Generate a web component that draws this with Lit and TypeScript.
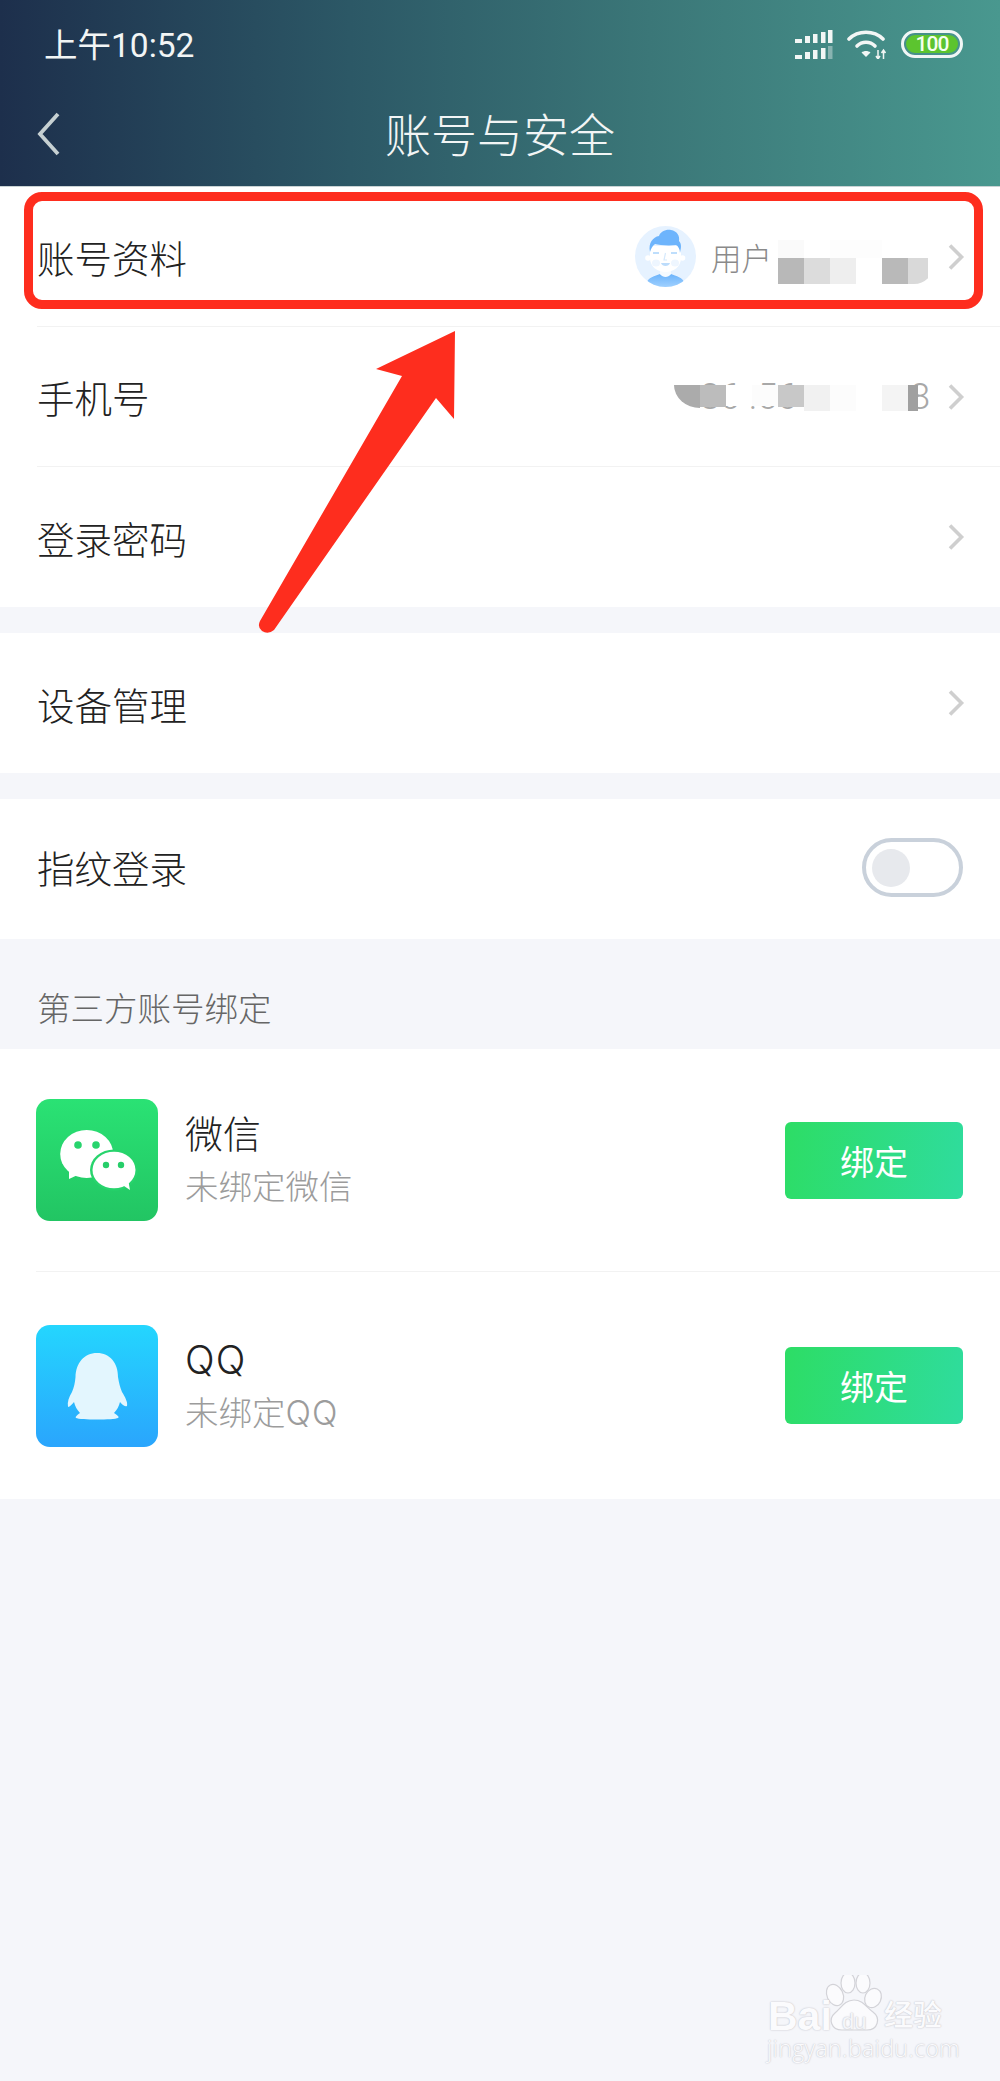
import { LitElement, html, css, svg } from "lit";
import { customElement } from "lit/decorators.js";

const chevron = html`<svg class="chev" width="18" height="28" viewBox="0 0 18 28"><path d="M3 2.5 L14.5 14 L3 25.5" fill="none" stroke="#cfcfcf" stroke-width="3.6"/></svg>`;

type Cell = [string, string?, number?];
const userCells: Cell[] = [
  ["#fafafa"], ["#fff"], ["#fdfdfd"], ["#fdfdfd"], ["#fff"], ["#fff"],
  ["#b8b8b8"], ["#dcdcdc"], ["#eeeeee"], ["#fff"], ["#b9b9b9"], ["#d9d9d9", "rr"],
];
const phoneCells: Cell[] = [
  ["#ababab", "rl", 23], ["#bcbcbc", "", 22], ["#fff", "", 21], ["#fcfcfc", "", 21], ["#c8c8c8", "", 22],
  ["#f1f1f1", "", 26], ["#fcfcfc", "", 26], ["#fff", "", 26], ["#f4f4f4", "", 26], ["#a0a0a0", "", 26],
];

@customElement("app-root")
export class AppRoot extends LitElement {
  static styles = css`
    :host { display: block; position: relative; height: 2081px; overflow: hidden; background: #f5f6fa;
      font-family: Roboto, "Noto Sans CJK SC", sans-serif; color: #333; }
    * { box-sizing: border-box; }
    .head { height: 187px; background: linear-gradient(90deg, #1d2f4c 0%, #2c5866 35%, #3b7778 65%, #49988f 100%); color: #f2f5f5; border-bottom: 1px solid #c9d3d4; }
    .status { height: 92px; display: flex; align-items: center; justify-content: space-between; padding: 0 37px 0 44px; }
    .time { font-size: 33.5px; line-height: 1; }
    .icons { display: flex; align-items: center; gap: 14px; margin-top: -4px; }
    .battery { width: 62px; height: 28px; border: 3px solid #f1f6f5; border-radius: 14px; padding: 2px; }
    .battery span { display: flex; height: 100%; border-radius: 9px; background: #5cc42f; color: #f4fff0; font-size: 21px; letter-spacing: -1px; font-weight: 500; line-height: 1; align-items: center; justify-content: center; }
    .nav { height: 94px; position: relative; display: flex; align-items: center; justify-content: center; padding-bottom: 6px; }
    .title { font-size: 46px; font-weight: 300; line-height: 1; }
    .back { position: absolute; left: 36px; top: 20px; }
    .group { background: #fff; margin-bottom: 26px; }
    .row { height: 140px; display: flex; align-items: center; justify-content: space-between; padding-right: 35px; margin-left: 37px; font-size: 37.5px; font-weight: 300; color: #222; border-bottom: 1px solid #f2f2f2; }
    .row.last { border-bottom: none; }
    .row.fp { padding-bottom: 6px; padding-right: 37px; }
    .value { display: flex; align-items: center; color: #8a8a8a; font-size: 30.5px; }
    .avatar { margin-right: 15px; }
    .mosaic { display: grid; grid-template-columns: repeat(6, 26px); grid-template-rows: 18px 26px; width: 150px; height: 44px; margin: 0 19px 0 6px; overflow: hidden; transform: translateY(5px); }
    .cell.rl { border-bottom-left-radius: 26px 23px; }
    .cell.rr { border-top-right-radius: 6px; border-bottom-right-radius: 20px; }
    .phone { position: relative; margin-right: 17px; width: 256px; height: 42px; line-height: 42px; white-space: nowrap; color: #a8a8a8; font-size: 36px; display: flex; justify-content: space-between; padding-left: 26px; }
    .veil { position: absolute; left: 0; top: 0; padding-top: 9px; display: grid; grid-template-columns: repeat(9, 26px) 10px; align-items: start; width: 244px; height: 42px; }
    .toggle { width: 101px; height: 59px; border: 4px solid #c9d1db; border-radius: 30px; background: #fff; padding: 7px 6px; transform: translateY(1px); }
    .toggle i { display: block; width: 38px; height: 38px; border-radius: 50%; background: #e7e9ed; }
    .label { height: 110px; padding: 52px 0 0 37px; font-size: 33.5px; line-height: 38px; font-weight: 300; color: #666; }
    .third { background: #fff; }
    .acct { display: flex; align-items: center; margin-left: 36px; padding-right: 37px; font-weight: 300; }
    .acct.a { height: 223px; border-bottom: 1px solid #f2f2f2; }
    .acct.b { height: 227px; }
    .icon { width: 122px; height: 122px; border-radius: 14px; flex: none; display: block; }
    .wx { background: linear-gradient(180deg, #2ae274, #22c563); }
    .qq { background: linear-gradient(180deg, #24d6fe, #2aa5fd); }
    .info { flex: 1; margin-left: 27px; display: flex; flex-direction: column; gap: 12px; }
    .name { font-size: 38px; line-height: 44px; color: #222; }
    .name.latin { font-size: 39px; }
    .sub { font-size: 33.5px; line-height: 38px; color: #9c9c9c; }
    .latin { font-family: Inter, sans-serif; letter-spacing: 0.03em; }
    .btn { width: 178px; height: 77px; border-radius: 6px; background: linear-gradient(100deg, #2ddd65, #2fdc9e); color: #fff; font-size: 34px; font-weight: 400; display: flex; align-items: center; justify-content: center; }
    .frame { position: absolute; left: 24px; top: 192px; width: 959px; height: 117px; border: 9px solid #fe2d1e; border-radius: 18px; pointer-events: none; }
    .arrow { position: absolute; left: 0; top: 0; }
    .mark { position: absolute; left: 766px; top: 1975px; width: 190px; height: 90px; color: #fbfbfd; text-shadow: 0 0 2px #c9c9cf, 0 0 1px #c9c9cf; }
    .mark svg { position: absolute; left: 0; top: 0; }
    .mark span { position: absolute; line-height: 1; white-space: nowrap; }
    .bai { left: 2px; top: 21px; font-size: 41px; font-family: "Liberation Sans", sans-serif; font-weight: 700; }
    .du { left: 76px; top: 36px; font-size: 22px; color: #f5f6fa; font-family: "Liberation Sans", sans-serif; }
    .jy { left: 118px; top: 27px; font-size: 29px; font-weight: 500; }
    .url { left: 1px; top: 62px; font-size: 23px; letter-spacing: 0.4px; font-weight: 300; font-family: "Open Sans", sans-serif; }
  `;

  private cells(list: Cell[]) {
    return list.map(([c, k, h]) => html`<div class="cell ${k ?? ""}" style="background:${c};${h ? `height:${h}px` : ""}"></div>`);
  }

  private avatar() {
    return html`<svg class="avatar" width="61" height="61" viewBox="0 0 61 61">
      <defs><clipPath id="ac"><circle cx="30.5" cy="30.5" r="30.5"/></clipPath>
      <linearGradient id="ag" x1="0" y1="0" x2="0" y2="1"><stop offset="0" stop-color="#6bb3fb"/><stop offset="1" stop-color="#a8d5ff"/></linearGradient></defs>
      <circle cx="30.5" cy="30.5" r="30.5" fill="#e6f2ff"/>
      <g clip-path="url(#ac)">
        <path d="M11 58 C13 51 20 50 25 48 C28 51 33 51 36 48 C41 50 48 51 50 58 C44 65 17 65 11 58Z" fill="url(#ag)"/>
        <path d="M25 40 H36 V48 C33 52 28 52 25 48Z" fill="#f6fbff"/>
        <circle cx="13" cy="32" r="2.8" fill="#fff"/><circle cx="47.5" cy="32" r="2.8" fill="#fff"/>
        <path d="M15 20 H46 V32 C46 41 38 46 30.5 46 C23 46 15 41 15 32Z" fill="#fff"/>
        <path d="M15 26 C13 17 18 11 24 10 C25 6 31 3 36 4 C42 5 45 10 44 15 C47 18 46 23 45 27 C45 23 43 20 41 19 C33 20 24 19 20 18 C17 20 16 23 15 26Z" fill="#6db4fc"/>
        <path d="M18 27 H24 M36 27 H42" stroke="#a9d3fb" stroke-width="1.6"/>
        <ellipse cx="21" cy="37" rx="4" ry="3.5" fill="#eef6ff"/><ellipse cx="40" cy="37" rx="4" ry="3.5" fill="#eef6ff"/>
        <path d="M30.5 27 L29 34 H32" fill="none" stroke="#d5e9fc" stroke-width="1.2"/>
        <path d="M26 37 H35 C34 41 27 41 26 37Z" fill="#bcdcfb"/>
      </g></svg>`;
  }

  private signal() {
    const spec = [[0, 7, 4], [10, 5, 7], [18, 4.5, 9], [26, 4.5, 11], [33, 4.5, 13]];
    const bars = (bottom: number, dim: boolean) =>
      spec.map(([x, w, h], i) => svg`<rect x="${x}" y="${bottom - h}" width="${w}" height="${h}" fill="#f2f6f5" opacity="${dim && i === 4 ? 0.4 : 1}"/>`);
    return html`<svg width="38" height="29" viewBox="0 0 38 29">${bars(13, false)}${bars(29, true)}</svg>`;
  }

  private wifi() {
    return html`<svg width="40" height="29" viewBox="0 0 40 29">
      <g fill="none" stroke="#f2f6f5" stroke-width="3.6" stroke-linecap="round">
        <path d="M2 9 C11 0 27 0 36 9"/><path d="M10 16 C15 11 23 11 28 16"/></g>
      <path d="M14.5 22.5 C17 20.5 21 20.5 23.5 22.5 L19 27Z" fill="#f2f6f5"/>
      <path d="M31 20 V29 M36.5 20 V29 M29 26 L31 29 L33 26 M34.5 23 L36.5 20 L38.5 23" fill="none" stroke="#f2f6f5" stroke-width="1.5"/>
    </svg>`;
  }

  render() {
    return html`
      <div class="head">
        <div class="status">
          <div class="time">上午10:52</div>
          <div class="icons">${this.signal()}${this.wifi()}<div class="battery"><span>100</span></div></div>
        </div>
        <div class="nav">
          <svg class="back" width="26" height="44" viewBox="0 0 26 44"><path d="M22 2 L4 22 L22 42" fill="none" stroke="#c6d0d2" stroke-width="3.8"/></svg>
          <div class="title">账号与安全</div>
        </div>
      </div>

      <div class="group">
        <div class="row"><span>账号资料</span>
          <div class="value">${this.avatar()}<span>用户</span><div class="mosaic">${this.cells(userCells)}</div>${chevron}</div>
        </div>
        <div class="row"><span>手机号</span>
          <div class="value"><div class="phone"><span>86 .56</span><span>8</span><div class="veil">${this.cells(phoneCells)}</div></div>${chevron}</div>
        </div>
        <div class="row last"><span>登录密码</span><div class="value">${chevron}</div></div>
      </div>
      <div class="group"><div class="row last"><span>设备管理</span><div class="value">${chevron}</div></div></div>
      <div class="group" style="margin-bottom:0"><div class="row last fp"><span>指纹登录</span><div class="toggle"><i></i></div></div></div>

      <div class="label">第三方账号绑定</div>
      <div class="third">
        <div class="acct a">
          <svg class="icon wx" viewBox="0 0 122 122">
            <ellipse cx="50.7" cy="55" rx="26.5" ry="24" fill="#fff"/>
            <path d="M33 70 L33 80 L46 74Z" fill="#fff"/>
            <ellipse cx="78" cy="71" rx="24" ry="20.5" fill="#27d46c"/>
            <ellipse cx="78" cy="71" rx="21.5" ry="18.3" fill="#fff"/>
            <path d="M85 85 L94 91 L92 80Z" fill="#fff"/>
            <circle cx="42" cy="46" r="3.8" fill="#28d46d"/><circle cx="60" cy="46" r="3.8" fill="#28d46d"/>
            <circle cx="70" cy="66" r="3.2" fill="#26ce69"/><circle cx="85" cy="66" r="3.2" fill="#26ce69"/>
          </svg>
          <div class="info"><div class="name">微信</div><div class="sub">未绑定微信</div></div>
          <div class="btn">绑定</div>
        </div>
        <div class="acct b">
          <svg class="icon qq" viewBox="0 0 122 122">
            <path d="M61 28 C48 28 40 38 39.5 52 C39 58 38 62 36 67 C33 72 31 77 32 82 C34 82 36 79 38 77 C39 81 41 85 44 88 C41 90 39 92 40 93 C44 95 78 95 82 93 C84 92 81 90 78 88 C81 85 83 81 84 77 C86 79 88 82 91 81 C92 77 89 72 86 67 C84 62 83 58 82 52 C82 38 74 28 61 28Z" fill="#e3f6fe"/>
          </svg>
          <div class="info"><div class="name latin">QQ</div><div class="sub">未绑定<span class="latin">QQ</span></div></div>
          <div class="btn">绑定</div>
        </div>
      </div>

      <div class="frame"></div>
      <svg class="arrow" width="1000" height="700" viewBox="0 0 1000 700">
        <path d="M455 331 L376 369 L402 376 L260 621 Q257 627 262 631 Q268 635 274 630 L436 398 L454 419Z" fill="#fe2d1e"/>
      </svg>

      <div class="mark">
        <svg width="190" height="70" viewBox="0 0 190 70" fill="#fbfbfd" stroke="#d3d3d8" stroke-width="1.2">
          <ellipse cx="69" cy="20" rx="8" ry="11" transform="rotate(-25 69 20)"/>
          <ellipse cx="82" cy="8" rx="7" ry="10"/>
          <ellipse cx="97" cy="8" rx="7" ry="10"/>
          <ellipse cx="107" cy="23" rx="8" ry="10" transform="rotate(25 107 23)"/>
          <path d="M88 25 C97 25 101 33 107 37 C115 43 112 55 101 55 C94 55 82 55 76 55 C65 55 62 44 69 38 C75 33 79 25 88 25Z"/>
        </svg>
        <span class="bai">Bai</span><span class="du">du</span><span class="jy">经验</span>
        <span class="url">jingyan.baidu.com</span>
      </div>
    `;
  }
}
